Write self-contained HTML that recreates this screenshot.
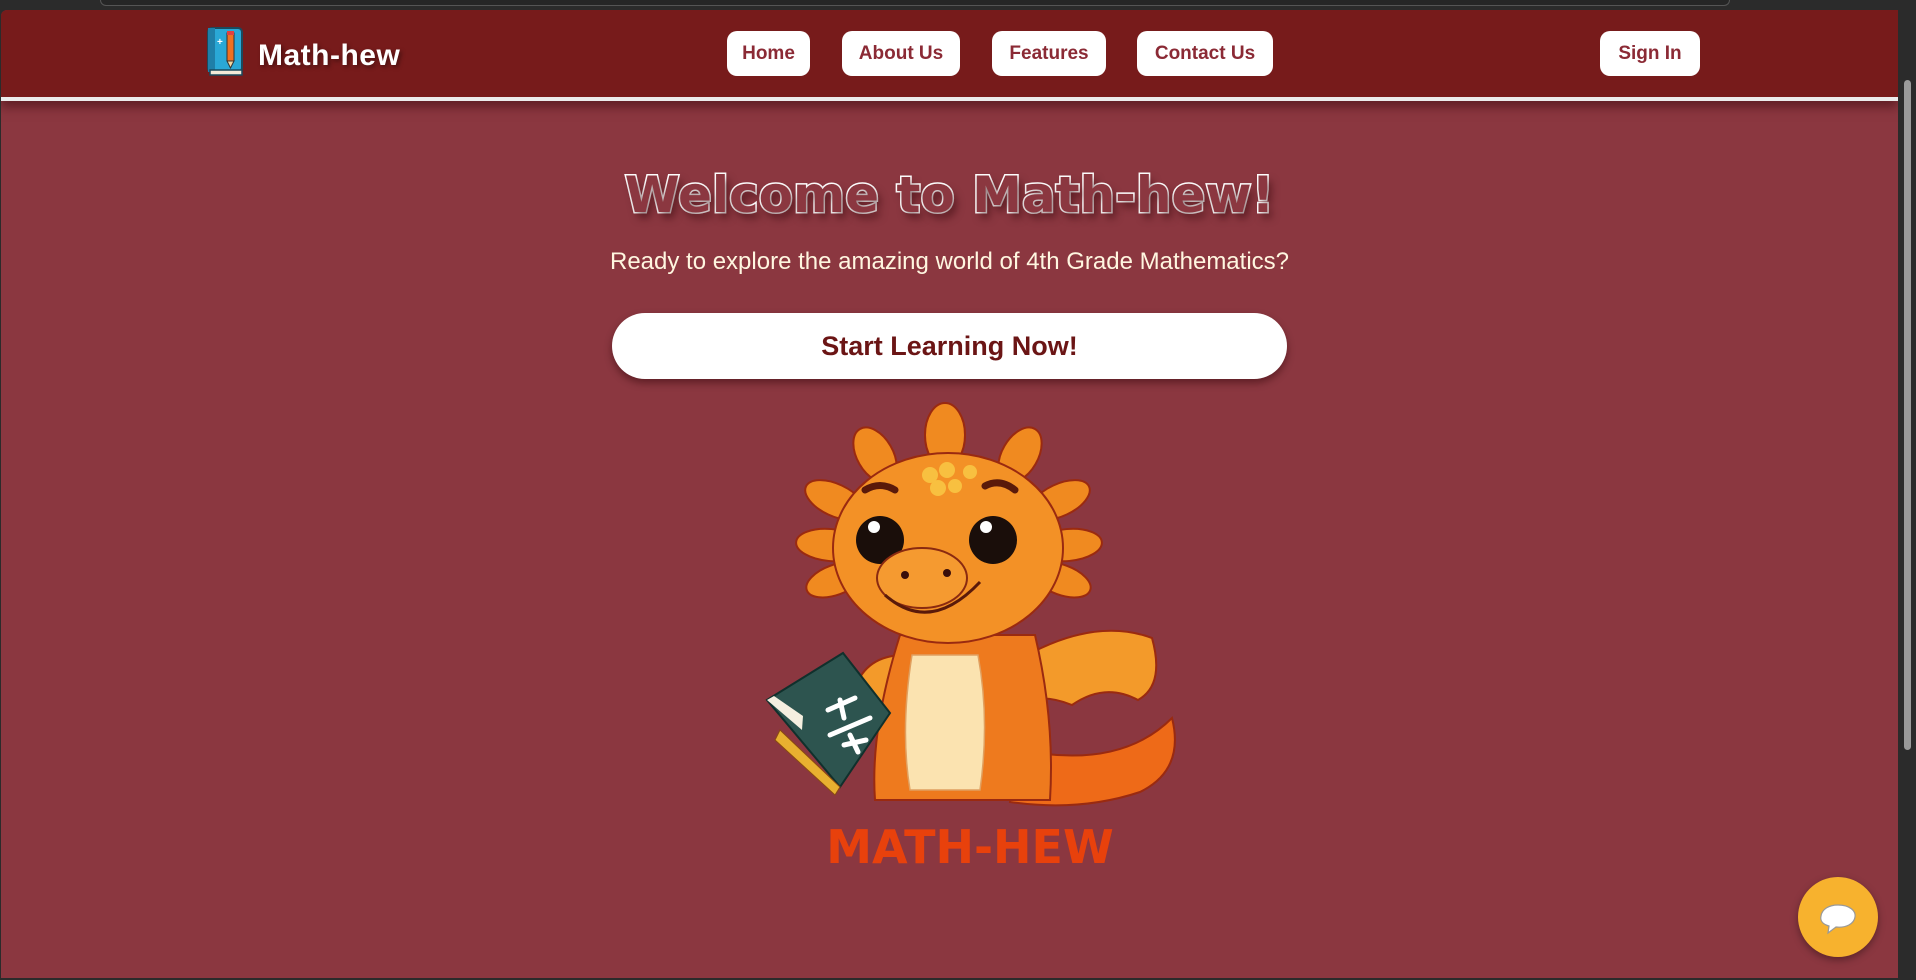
<!DOCTYPE html>
<html><head><meta charset="utf-8"><style>
*{margin:0;padding:0;box-sizing:border-box}
html,body{width:1916px;height:980px;overflow:hidden;background:#2b2b2b;font-family:"Liberation Sans",sans-serif}
#page{position:absolute;left:1px;top:10px;width:1897px;height:968px;background:#8b3740;overflow:hidden;border-radius:6px 0 0 0}
#chrome{position:absolute;left:100px;top:0;width:1630px;height:6px;border:1px solid #555;border-top:none;border-radius:0 0 12px 12px;background:#262626}
#scroll{position:absolute;left:1898px;top:10px;width:18px;height:970px;background:#2b2b2b}
#thumb{position:absolute;left:1904px;top:80px;width:7px;height:670px;background:#9a9a9a;border-radius:4px}
header{position:absolute;left:0;top:0;width:100%;height:91px;background:#771b1b;border-bottom:4px solid #ececec;box-shadow:0 6px 10px rgba(60,10,15,.55)}
.logo{position:absolute;left:257px;top:29px;color:#fff;font-weight:bold;font-size:30px;text-shadow:2px 2px 4px rgba(0,0,0,.4);letter-spacing:.5px}
.nb{position:absolute;top:21px;height:45px;background:#fff;border-radius:10px;color:#8b2a35;font-size:19px;font-weight:bold;display:flex;align-items:center;justify-content:center}
h1{position:absolute;left:0;width:1897px;top:156px;text-align:center;font-size:50px;font-weight:bold;color:#8b3740;-webkit-text-stroke:3px #fff;paint-order:stroke fill;text-shadow:4px 6px 8px rgba(50,5,10,.5);font-family:"DejaVu Sans",sans-serif}
.sub{position:absolute;left:0;width:1897px;top:238px;text-align:center;color:#fff6e0;font-size:24px}
.btn{position:absolute;left:611px;top:303px;width:675px;height:66px;background:#fff;border-radius:33px;box-shadow:0 4px 8px rgba(40,0,5,.45);color:#6b1515;font-weight:bold;font-size:27px;display:flex;align-items:center;justify-content:center}
.chat{position:absolute;left:1797px;top:867px;width:80px;height:80px;border-radius:50%;background:#f7b22e;box-shadow:0 3px 8px rgba(0,0,0,.35)}
</style></head><body>
<div id="chrome"></div>
<div id="page">
<header>
<svg style="position:absolute;left:206px;top:17px" width="38" height="50" viewBox="0 0 38 50">
<rect x="1" y="1" width="34" height="44" rx="4" fill="#2aa8d6" stroke="#1a4a5e" stroke-width="2"/>
<rect x="1" y="1" width="7" height="44" fill="#1f7fa8"/>
<rect x="3" y="43" width="32" height="5" fill="#f2ead8" stroke="#1a4a5e" stroke-width="1.5"/>
<rect x="20" y="6" width="7" height="28" fill="#f07020" stroke="#333" stroke-width="1"/>
<rect x="20" y="4" width="7" height="4" fill="#e04040"/>
<polygon points="20,34 27,34 23.5,41" fill="#f4d6a0" stroke="#333" stroke-width="1"/>
<text x="10" y="18" fill="#fff" font-size="10" font-weight="bold">+</text>
</svg>
<div class="logo">Math-hew</div>
<div class="nb" style="left:726px;width:83px">Home</div>
<div class="nb" style="left:841px;width:118px">About Us</div>
<div class="nb" style="left:991px;width:114px">Features</div>
<div class="nb" style="left:1136px;width:136px">Contact Us</div>
<div class="nb" style="left:1599px;width:100px">Sign In</div>
</header>
<h1>Welcome to Math-hew!</h1>
<div class="sub">Ready to explore the amazing world of 4th Grade Mathematics?</div>
<div class="btn">Start Learning Now!</div>
<svg style="position:absolute;left:739px;top:390px" width="460" height="480" viewBox="0 0 460 480">
<g stroke="#9a2a10" stroke-width="2" fill="#f08a20">
<path d="M280 350 Q380 370 432 318 Q445 370 400 392 Q340 412 270 402 Z" fill="#ee6a18"/>
<path d="M270 265 Q350 215 412 238 Q425 285 398 300 Q365 282 332 305 Q300 292 278 305 Z" fill="#f39a2a"/>
<path d="M165 255 Q120 255 112 300 L155 315 Z" fill="#f39a2a"/>
<ellipse cx="205" cy="35" rx="20" ry="32"/>
<ellipse cx="135" cy="55" rx="18" ry="30" transform="rotate(-30 135 55)"/>
<ellipse cx="280" cy="55" rx="18" ry="30" transform="rotate(30 280 55)"/>
<ellipse cx="95" cy="100" rx="16" ry="32" transform="rotate(-65 95 100)"/>
<ellipse cx="320" cy="100" rx="16" ry="32" transform="rotate(65 320 100)"/>
<ellipse cx="90" cy="145" rx="16" ry="34" transform="rotate(-85 90 145)"/>
<ellipse cx="328" cy="145" rx="16" ry="34" transform="rotate(85 328 145)"/>
<ellipse cx="95" cy="180" rx="15" ry="30" transform="rotate(-110 95 180)"/>
<ellipse cx="322" cy="180" rx="15" ry="30" transform="rotate(110 322 180)"/>
<path d="M160 235 Q130 330 135 400 L310 400 Q315 320 295 235 Z" fill="#ee7a1e"/>
<path d="M172 255 Q160 330 170 390 L240 390 Q250 320 238 255 Z" fill="#fbe3b0" stroke="#e0a060" stroke-width="1.5"/>
<ellipse cx="208" cy="148" rx="115" ry="95" fill="#f39126"/>
</g>
<circle cx="140" cy="140" r="24" fill="#1a0e0a"/><circle cx="134" cy="127" r="6" fill="#fff"/>
<circle cx="253" cy="140" r="24" fill="#1a0e0a"/><circle cx="246" cy="127" r="6" fill="#fff"/>
<path d="M125 90 Q140 81 155 90" stroke="#5a1a0a" stroke-width="7" fill="none" stroke-linecap="round"/>
<path d="M245 86 Q260 78 275 90" stroke="#5a1a0a" stroke-width="7" fill="none" stroke-linecap="round"/>
<ellipse cx="182" cy="178" rx="45" ry="30" fill="#f59a30" stroke="#8a2a10" stroke-width="2"/>
<path d="M145 195 Q190 235 240 182" stroke="#5a1a0a" stroke-width="3" fill="none"/>
<circle cx="165" cy="175" r="4" fill="#3a0e0a"/><circle cx="207" cy="173" r="4" fill="#3a0e0a"/>
<g fill="#f8c040"><circle cx="190" cy="75" r="8"/><circle cx="207" cy="70" r="8"/><circle cx="198" cy="88" r="8"/><circle cx="215" cy="86" r="7"/><circle cx="230" cy="72" r="7"/></g>
<polygon points="27,300 103,253 150,313 100,387" fill="#2d544f" stroke="#10302c" stroke-width="2"/>
<polygon points="27,300 62,330 63,316 34,296" fill="#f5efe0"/>
<polygon points="40,330 100,387 95,395 35,340" fill="#e8b030" stroke="#8a4a10" stroke-width="1"/>
<g stroke="#fff" stroke-width="5" stroke-linecap="round"><path d="M88 310 L115 298M100 300 L104 318M90 335 L130 318M110 335 L118 352M104 345 L126 340"/></g>
<text x="230" y="463" text-anchor="middle" font-family="DejaVu Sans,sans-serif" font-weight="bold" font-size="46" fill="#e8410c">MATH-HEW</text>
</svg>
<div class="chat"><svg width="80" height="80" viewBox="0 0 80 80"><path d="M40 28 C52 28 58 34 57 40 C56 47 48 51 38 50 L30 56 L31 49 C24 47 22 43 23 39 C24 32 31 28 40 28 Z" fill="#fff" stroke="#999" stroke-width="1.2"/></svg></div>
</div>
<div id="scroll"></div><div id="thumb"></div>
</body></html>
